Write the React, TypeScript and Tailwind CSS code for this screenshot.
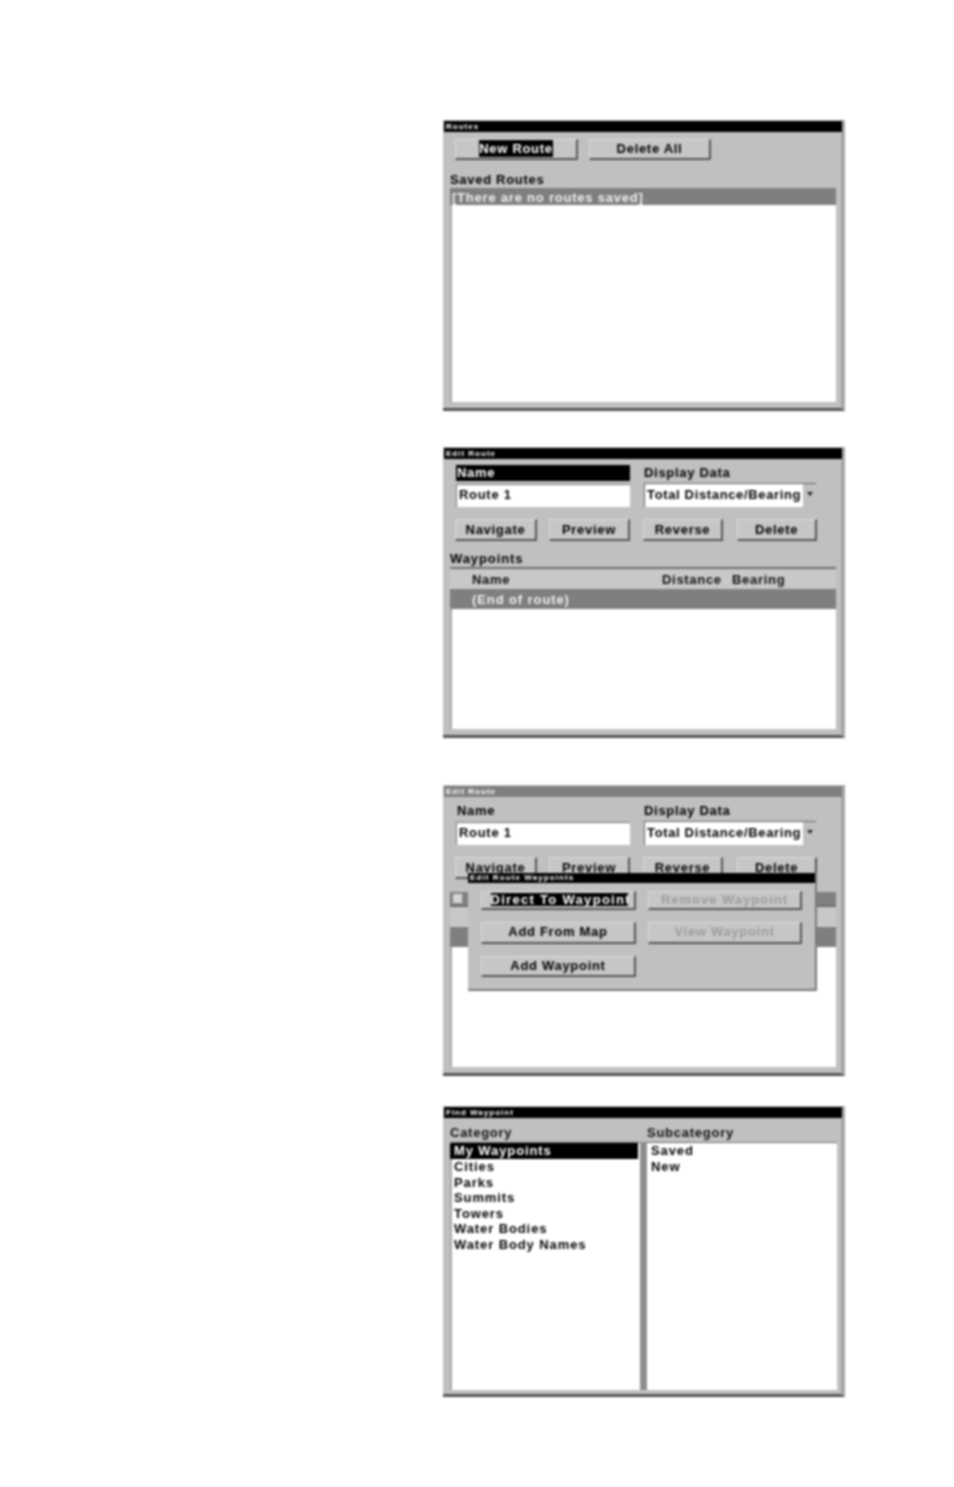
import React from "react";

function Btn({ w, h = "h-[21px]", children, sel, dis, ml, wide, low }: { w: string; h?: string; children: React.ReactNode; sel?: boolean; dis?: boolean; ml?: string; wide?: boolean; low?: boolean }) {
  return (
    <div className={`${w} ${h} ${ml ?? ""} ${low ? "" : "pb-[1px]"} shrink-0 flex items-center justify-center bg-[#c6c6c6] border-r-2 border-b-2 border-t border-l border-r-[#555555] border-b-[#555555] border-t-[#dadada] border-l-[#dadada] text-[13px] font-bold ${wide ? "tracking-[1px]" : "tracking-[0.7px]"} whitespace-nowrap ${dis ? "text-[#9c9c9c]" : "text-black"}`}>
      {sel ? <span className={`bg-black text-white ${wide ? "w-[137px] overflow-hidden h-[13px] leading-[13px] ml-[2px] tracking-[1.3px]" : "leading-[17px]"}`}>{children}</span> : children}
    </div>
  );
}

function Panel({ title, active = true, children }: { title: string; active?: boolean; children: React.ReactNode }) {
  return (
    <div className="relative w-[402px] h-[291px] flex flex-col bg-[#c0c0c0] border-b-[3px] border-b-[#555555] border-r-[4px] border-r-[#a6a6a6] pt-[1px]">
      <div className={`h-[11px] shrink-0 ml-[1px] mr-[-1px] pl-[2px] text-[8px] leading-[11px] font-bold tracking-[1px] text-white ${active ? "bg-black" : "bg-[#7f7f7f]"}`}>{title}</div>
      <div className="flex-1 flex flex-col min-h-0 pl-[7px] pr-[5px] pb-[6px]">{children}</div>
    </div>
  );
}

function RouteHead({ selected }: { selected?: boolean }) {
  return (
    <div className="flex ml-[6px] mt-[6px] h-[42px] shrink-0">
      <div className="w-[174px] flex flex-col">
        <div className={`h-[16px] text-[13px] leading-[16px] font-bold tracking-[0.7px] pl-[1px] ${selected ? "bg-black text-white" : "text-black"}`}>Name</div>
        <div className="mt-[3px] h-[23px] bg-white border-t border-l border-[#777777] text-[13px] leading-[20px] font-bold tracking-[0.7px] pl-[2px] text-black">Route 1</div>
      </div>
      <div className="w-[172px] ml-[14px] flex flex-col">
        <div className="h-[16px] text-[13px] leading-[16px] font-bold tracking-[0.7px] text-black">Display Data</div>
        <div className="mt-[2px] h-[24px] flex border-t border-l border-[#666666]">
          <div className="w-[158px] bg-white text-[13px] leading-[21px] font-bold tracking-[0.65px] pl-[2px] text-black whitespace-nowrap">Total Distance/Bearing</div>
          <svg width="10" height="20" viewBox="0 0 10 20" className="ml-[2px]"><path d="M2 8h6l-3 4z" fill="#222" /></svg>
        </div>
      </div>
    </div>
  );
}

function RouteButtons() {
  return (
    <div className="flex ml-[5px] mt-[12px] shrink-0">
      <Btn w="w-[82px]" h="h-[22px]" low>Navigate</Btn>
      <Btn w="w-[81px]" h="h-[22px]" ml="ml-[12px]" low>Preview</Btn>
      <Btn w="w-[80px]" h="h-[22px]" ml="ml-[13px]" low>Reverse</Btn>
      <Btn w="w-[80px]" h="h-[22px]" ml="ml-[14px]" low>Delete</Btn>
    </div>
  );
}

function RouteList() {
  return (
    <div className="flex-1 flex flex-col min-h-0 border-t-2 border-[#6e6e6e]">
      <div className="h-[20px] shrink-0 flex bg-[#c8c8c8] text-[13px] leading-[21px] font-bold tracking-[0.7px] text-[#111111]">
        <span className="ml-[22px] w-[190px]">Name</span>
        <span className="w-[70px]">Distance</span>
        <span>Bearing</span>
      </div>
      <div className="h-[20px] shrink-0 bg-[#7f7f7f] text-[#f0f0f0] text-[13px] leading-[21px] font-bold tracking-[0.9px] pl-[22px]">(End of route)</div>
      <div className="flex-1 bg-white border-l-2 border-[#a8a8a8]" />
    </div>
  );
}

function Row({ children, sel }: { children: React.ReactNode; sel?: boolean }) {
  return (
    <div className={`text-[13px] font-bold tracking-[0.9px] pl-[2px] whitespace-nowrap ${sel ? "bg-black text-white h-[16px] leading-[16px]" : "text-black h-[15.6px] leading-[15.6px]"}`}>{children}</div>
  );
}

export default function App() {
  return (
    <div className="w-[954px] h-[1487px] bg-white pl-[443px] pt-[120px] flex flex-col font-['Liberation_Sans',Arial,sans-serif] blur-[0.9px] overflow-hidden">
      <Panel title="Routes">
        <div className="flex ml-[5px] mt-[7px] shrink-0">
          <Btn w="w-[123px]" sel>New Route</Btn>
          <Btn w="w-[122px]" ml="ml-[11px]">Delete All</Btn>
        </div>
        <div className="mt-[12px] h-[16px] text-[13px] leading-[16px] font-bold tracking-[0.7px] text-black">Saved Routes</div>
        <div className="flex-1 flex flex-col min-h-0">
          <div className="h-[17px] shrink-0 bg-[#7f7f7f] text-[#f0f0f0] text-[13px] leading-[19px] font-bold tracking-[0.78px] pl-[2px] whitespace-nowrap">[There are no routes saved]</div>
          <div className="flex-1 bg-white border-l-2 border-[#a8a8a8]" />
        </div>
      </Panel>

      <div className="mt-[36px]">
        <Panel title="Edit Route">
          <RouteHead selected />
          <RouteButtons />
          <div className="mt-[10px] h-[16px] text-[13px] leading-[15px] font-bold tracking-[0.9px] text-black">Waypoints</div>
          <RouteList />
        </Panel>
      </div>

      <div className="mt-[47px]">
        <Panel title="Edit Route" active={false}>
          <RouteHead />
          <RouteButtons />
          <div className="mt-[13px] h-[13px] bg-[#808080] flex items-center pl-[2px]">
            <div className="w-[11px] h-[11px] bg-[#d4d4d4] border border-[#8a8a8a]" />
          </div>
          <RouteList />
          <div className="absolute left-[25px] top-[88px] w-[349px] h-[118px] bg-[#c0c0c0] border-r-2 border-b-2 border-r-[#777777] border-b-[#777777] flex flex-col">
            <div className="h-[10px] shrink-0 bg-black text-white text-[8px] leading-[10px] font-bold tracking-[1.1px] pl-[2px]">Edit Route Waypoints</div>
            <div className="grid grid-cols-[155px_154px] gap-x-[12px] gap-y-[12px] ml-[13px] mt-[8px]">
              <Btn w="w-[155px]" h="h-[19px]" sel wide>Direct To Waypoint</Btn>
              <Btn w="w-[154px]" h="h-[19px]" dis wide>Remove Waypoint</Btn>
              <Btn w="w-[155px]" h="h-[22px]">Add From Map</Btn>
              <Btn w="w-[154px]" h="h-[22px]" dis>View Waypoint</Btn>
              <Btn w="w-[155px]" h="h-[21px]">Add Waypoint</Btn>
            </div>
          </div>
        </Panel>
      </div>

      <div className="mt-[30px]">
        <Panel title="Find Waypoint">
          <div className="flex flex-1 min-h-0 mb-[-2px] mr-[-1px]">
            <div className="w-[190px] flex flex-col">
              <div className="h-[19px] mt-[5px] text-[13px] leading-[19px] font-bold tracking-[0.75px] text-[#111111]">Category</div>
              <div className="flex-1 bg-white border-t border-[#6e6e6e] border-l-2 border-l-[#a8a8a8]">
                <div className="ml-[-2px] mr-[2px]"><Row sel><span className="ml-[2px]">My Waypoints</span></Row></div>
                <Row>Cities</Row>
                <Row>Parks</Row>
                <Row>Summits</Row>
                <Row>Towers</Row>
                <Row>Water Bodies</Row>
                <Row>Water Body Names</Row>
              </div>
            </div>
            <div className="w-[7px] bg-[#8c8c8c] mt-[24px]" />
            <div className="w-[190px] flex flex-col">
              <div className="h-[19px] mt-[5px] text-[13px] leading-[19px] font-bold tracking-[0.75px] text-[#111111]">Subcategory</div>
              <div className="flex-1 bg-white border-t border-[#6e6e6e] pl-[2px]">
                <Row>Saved</Row>
                <Row>New</Row>
              </div>
            </div>
          </div>
        </Panel>
      </div>
    </div>
  );
}
